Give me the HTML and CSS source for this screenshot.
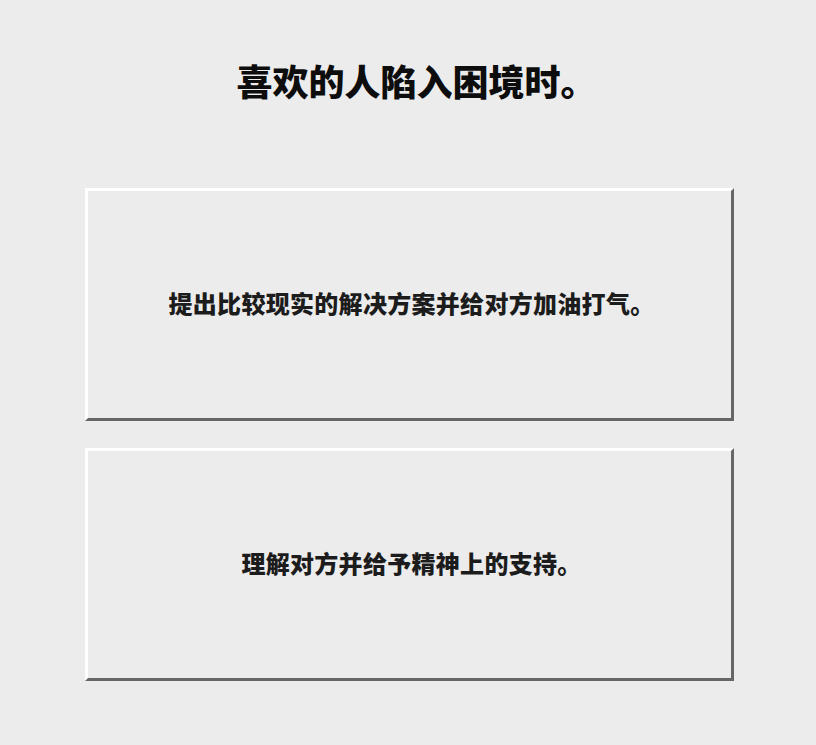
FILE: index.html
```html
<!DOCTYPE html>
<html lang="zh">
<head>
<meta charset="utf-8">
<title>喜欢的人陷入困境时。</title>
<link rel="stylesheet" href="styles.css">
</head>
<body>
<main class="quiz">
  <h1 class="question">喜欢的人陷入困境时。</h1>
  <div class="choices">
    <button class="choice">提出比较现实的解决方案并给对方加油打气。</button>
    <button class="choice">理解对方并给予精神上的支持。</button>
  </div>
</main>
</body>
</html>
```

FILE: styles.css
```css
html, body {
  margin: 0;
  padding: 0;
  background: #ececec;
}

body {
  font-family: "Noto Sans CJK SC", "Noto Sans", sans-serif;
  color: #111;
}

.quiz {
  display: flex;
  flex-direction: column;
  align-items: center;
  padding-top: 55px;
}

.question {
  margin: 0;
  padding-left: 17px;
  font-size: 36px;
  font-weight: 900;
  line-height: 50px;
  color: #0d0d0d;
}

.choices {
  display: flex;
  flex-direction: column;
  gap: 27px;
  margin-top: 83px;
  margin-left: 3px;
}

.choice {
  box-sizing: border-box;
  width: 649px;
  height: 233px;
  background: #ececec;
  border: 3px solid;
  border-color: #ffffff #666666 #666666 #ffffff;
  font-family: inherit;
  font-size: 24px;
  font-weight: 900;
  letter-spacing: 0.3px;
  color: #1c1c1c;
  padding: 0 0 4px 4px;
  cursor: pointer;
}
```
